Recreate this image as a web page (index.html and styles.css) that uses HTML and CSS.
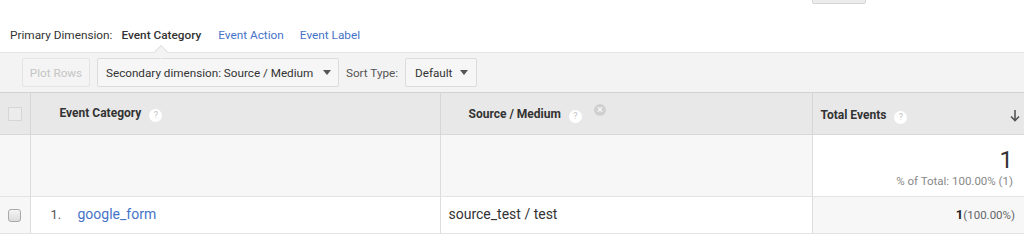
FILE: index.html
```html
<!DOCTYPE html>
<html>
<head>
<meta charset="utf-8">
<link rel="stylesheet" href="styles.css">
</head>
<body>
<div class="topbar"><span class="topbtn"></span></div>
<div class="primary">
  <span class="pd-label">Primary Dimension:</span>
  <span class="pd-active">Event Category</span>
  <a class="pd-link">Event Action</a>
  <a class="pd-link">Event Label</a>
</div>
<div class="toolbar">
  <span class="btn disabled">Plot Rows</span>
  <span class="btn select sec">Secondary dimension: Source / Medium <i class="caret"></i></span>
  <span class="sort-label">Sort Type:</span>
  <span class="btn select def">Default <i class="caret"></i></span>
</div>
<table class="grid">
  <colgroup><col class="c0"><col class="c1"><col class="c2"><col class="c3"></colgroup>
  <thead>
    <tr>
      <th class="chk"><span class="hbox"></span></th>
      <th class="h1">Event Category <span class="help">?</span></th>
      <th class="h2">Source / Medium <span class="help">?</span><span class="close">&#215;</span></th>
      <th class="h3"><span class="h3t">Total Events <span class="help">?</span></span><svg class="arrow" width="10" height="13" viewBox="0 0 10 13"><path d="M5 1 V11.5 M1 7.5 L5 11.5 L9 7.5" fill="none" stroke="#555" stroke-width="1.6"/></svg></th>
    </tr>
  </thead>
  <tbody>
    <tr class="totals">
      <td class="chk"></td>
      <td></td>
      <td></td>
      <td class="tot"><div class="big">1</div><div class="pct">% of Total: 100.00% (1)</div></td>
    </tr>
    <tr class="row">
      <td class="chk"><span class="cbox"></span></td>
      <td class="cat"><span class="idx">1.</span><a class="lnk">google_form</a></td>
      <td class="src">source_test / test</td>
      <td class="val"><b>1</b><span class="vp">(100.00%)</span></td>
    </tr>
  </tbody>
</table>
</body>
</html>
```
FILE: styles.css
```css
* { box-sizing: border-box; }
body {
  margin: 0;
  background: #fff;
  font-family: Roboto, "Liberation Sans", Arial, sans-serif;
  color: #333;
  font-size: 12px;
}
.topbar {
  height: 24px;
  display: flex;
  justify-content: flex-end;
  padding-right: 158px;
}
.topbtn {
  width: 54px;
  height: 24px;
  margin-top: -20px;
  background: #ececec;
  border: 1px solid #d6d6d6;
  border-radius: 2px;
}
.primary {
  height: 28px;
  display: flex;
  align-items: flex-start;
  padding: 4px 0 0 10px;
  line-height: 14px;
  font-size: 11.8px;
}
.pd-label { color: #333; margin-right: 9px; }
.pd-active { color: #333; font-weight: 500; margin-right: 17px; position: relative; }
.pd-active::after {
  content: "";
  position: absolute;
  left: calc(50% - 5px);
  top: 19px;
  width: 9px;
  height: 9px;
  background: #f3f3f3;
  border-left: 1px solid #e2e2e2;
  border-top: 1px solid #e2e2e2;
  transform: rotate(45deg);
  z-index: 2;
}
.pd-link { color: #4673c8; margin-right: 16px; }
.toolbar {
  height: 40px;
  background: #f3f3f3;
  border-top: 1px solid #e4e4e4;
  display: flex;
  align-items: center;
  padding-left: 22px;
  position: relative;
  z-index: 1;
}
.btn {
  height: 29px;
  display: inline-flex;
  align-items: center;
  border: 1px solid #dcdcdc;
  border-radius: 2px;
  background: #f6f6f6;
  padding: 0 8px;
  font-size: 11.7px;
  color: #333;
  white-space: nowrap;
}
.btn.disabled { color: #c4c4c4; width: 68px; justify-content: center; margin-right: 7px; background: #f4f4f4; border-color: #e4e4e4; padding: 0; }
.btn.sec { width: 242px; padding-left: 8px; padding-right: 7px; }
.btn.def { width: 72px; padding-left: 9px; padding-right: 8px; }
.caret {
  margin-left: auto;
  width: 0; height: 0;
  border-left: 4px solid transparent;
  border-right: 4px solid transparent;
  border-top: 5px solid #555;
}
.sort-label { color: #555; margin: 0 7px 0 7px; font-size: 11.7px; }
.grid {
  border-collapse: collapse;
  table-layout: fixed;
  width: 1024px;
}
.c0 { width: 30px; }
.c1 { width: 410px; }
.c2 { width: 372px; }
.c3 { width: 212px; }
thead th {
  height: 42px;
  background: #e8e8e8;
  border-top: 1px solid #d2d2d2;
  border-bottom: 1px solid #d8d8d8;
  border-left: 1px solid #d6d6d6;
  text-align: left;
  font-weight: 700;
  font-size: 12px;
  color: #333;
  padding: 0;
  vertical-align: middle;
  white-space: nowrap;
}
thead th.chk { border-left: none; text-align: center; }
.hbox {
  display: inline-block;
  width: 14px; height: 14px;
  border: 1px solid #d6d6d6;
  background: #ececec;
  vertical-align: middle;
}
th.h1 { padding-left: 29px; }
th.h2 { padding-left: 28px; }
th.h3 { padding: 5px 4px 0 8px; }
.h3t { display: inline-block; }
.help {
  display: inline-block;
  width: 13px; height: 13px;
  border-radius: 50%;
  background: #fff;
  color: #c4c4c4;
  font-size: 9px;
  font-weight: 400;
  text-align: center;
  line-height: 13px;
  margin-left: 5px;
  vertical-align: -1px;
}
.close {
  display: inline-block;
  width: 12px; height: 12px;
  border-radius: 50%;
  background: #d0d0d0;
  color: #fff;
  font-size: 11px;
  font-weight: 400;
  text-align: center;
  line-height: 12px;
  margin-left: 12px;
  vertical-align: 5px;
}
.arrow { float: right; margin-top: 1px; }
tbody td {
  border-left: 1px solid #dcdcdc;
  border-bottom: 1px solid #e3e3e3;
  padding: 0;
}
tbody td.chk { border-left: none; background: #f7f7f7; text-align: center; }
.totals td { height: 62px; background: #f7f7f7; }
.totals td.tot { background: #fff; text-align: right; padding-right: 11px; vertical-align: top; padding-top: 14px; }
.big { font-size: 24px; font-weight: 400; color: #333; line-height: 22px; }
.pct { font-size: 11.5px; color: #888; margin-top: 3px; }
.row td { height: 37px; background: #fff; font-size: 14px; padding-bottom: 2px; }
.row td.chk { background: #f7f7f7; }
.cbox {
  display: inline-block;
  width: 13px; height: 13px;
  border: 1px solid #aaa;
  border-radius: 3px;
  background: linear-gradient(#f4f4f4, #dcdcdc);
  vertical-align: middle;
}
.row td.cat { padding-left: 20px; }
.idx { color: #555; display: inline-block; width: 27px; font-size: 13px; }
.lnk { color: #4673c8; }
.row td.src { padding-left: 8px; color: #333; }
.row td.val { background: #f7f7f7; text-align: right; padding-right: 9px; }
.val b { font-weight: 700; color: #222; font-size: 13px; }
.vp { font-size: 11.5px; color: #666; }
```
